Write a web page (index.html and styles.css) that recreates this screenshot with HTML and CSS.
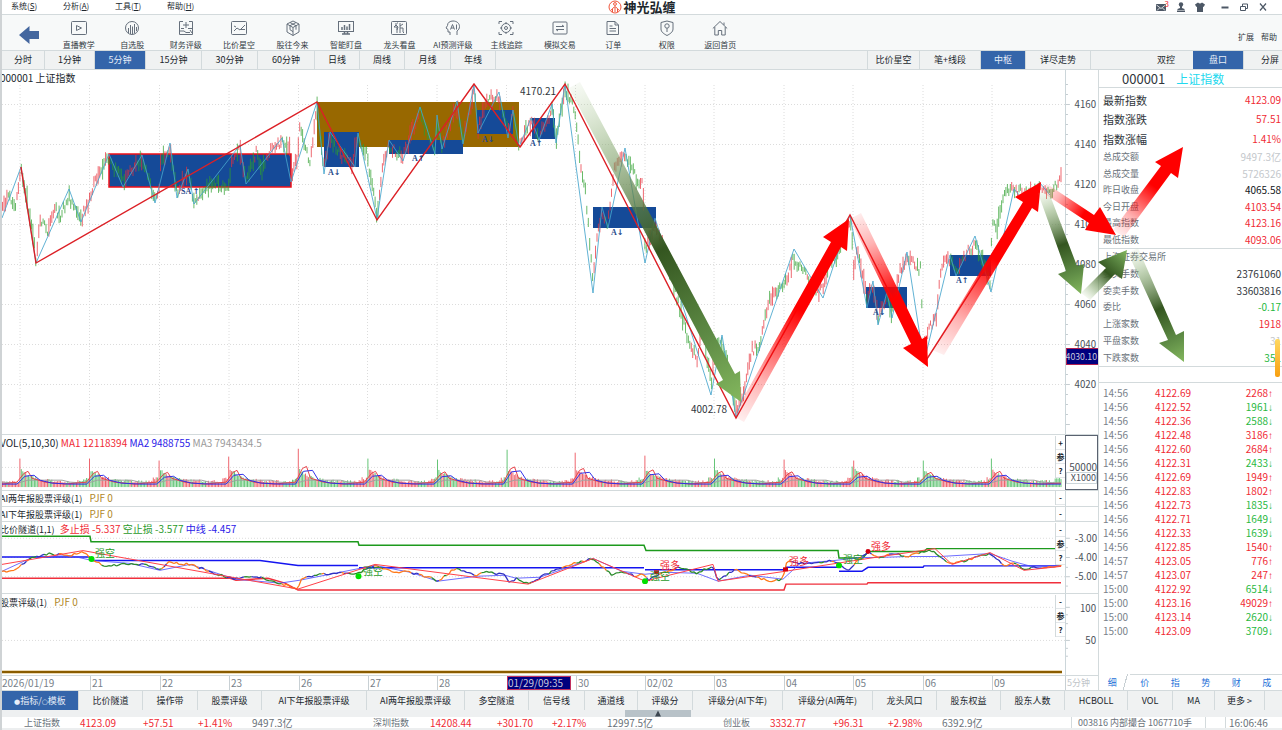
FILE: index.html
```html
<!DOCTYPE html>
<html lang="zh-CN">
<head>
<meta charset="utf-8">
<title>神光弘缠</title>
<link rel="stylesheet" href="styles.css">
</head>
<body>
<div class="app">
  <header class="menubar">
    <nav class="menus">
      <button>系统(<u>S</u>)</button><button>分析(<u>A</u>)</button><button>工具(<u>T</u>)</button><button>帮助(<u>H</u>)</button>
    </nav>
    <div class="brand">
      <svg width="14" height="14" viewBox="0 0 14 14" fill="none" stroke="#f0563c"><circle cx="7" cy="7" r="6"/><circle cx="7" cy="4" r="1.4"/><path d="M4.5 12V8.5L7 6.5l2.5 2V12M7 7v5M3 10l1.5-1M11 10L9.5 9"/></svg>
      <span>神光弘缠</span>
    </div>
    <div class="window-tools">
      <button aria-label="消息" class="mail"><svg width="12" height="9" viewBox="0 0 12 9"><rect x="1" y="1" width="10" height="7" fill="#4d5866"/><path d="M1.5 2L6 5.5 10.5 2M2 7.5l2.5-2.5M10 7.5L7.5 5" stroke="#fff" fill="none" stroke-width=".8"/></svg><span class="count">3</span></button>
      <button aria-label="用户"><svg width="10" height="10" viewBox="0 0 10 10" fill="#4d5866"><circle cx="5" cy="2.5" r="2.2"/><path d="M4 4h2v2l2.5 1v1h-7V7L4 6zM1 8.5h8V10H1z"/></svg></button>
      <button aria-label="皮肤"><svg width="10" height="10" viewBox="0 0 10 10" fill="#4d5866"><path d="M3 .5Q5 2.5 7 .5L10 2.5 8.7 5 8 4.5V10H2V4.5L1.3 5 0 2.5z"/></svg></button>
      <button aria-label="最小化" class="wide"><svg width="10" height="10" viewBox="0 0 10 10"><path d="M1.5 5.5h7" stroke="#4d5866" stroke-width="2"/></svg></button>
      <button aria-label="还原"><svg width="10" height="10" viewBox="0 0 10 10" fill="none" stroke="#4d5866"><path d="M1.5 4.5h5v4h-5zM3.5 4V2h5v4.5H7"/></svg></button>
      <button aria-label="关闭"><svg width="10" height="10" viewBox="0 0 10 10" stroke="#4d5866" stroke-width="1.2"><path d="M2 1.5l6 7M8 1.5l-6 7"/></svg></button>
    </div>
  </header>

  <div class="toolbar">
    <button class="back" aria-label="返回"><svg width="22" height="20" viewBox="0 0 22 20"><path d="M1 10L11.5 1v5H21v8h-9.5v5z" fill="#44679f"/></svg></button>
    <nav class="tools">
      <button><svg viewBox="0 0 16 16"><rect x=".5" y="1.5" width="15" height="13" rx="1"/><path d="M5.5 5.5v5l5-2.5z"/></svg>直播教学</button>
      <button><svg viewBox="0 0 16 16"><circle cx="8" cy="8" r="6.5"/><path d="M4.5 8v5M6.5 5v9M8.5 6.5V14M10.5 4v9.5M12.5 7v4"/></svg>自选股</button>
      <button><svg viewBox="0 0 16 16"><path d="M5 1.5H1.5v13h13v-13H11M8 2v6M5 5h6M3 8.5h3M10 8.5h4M2 11h4l2 1.5h4M12 10l2 3"/></svg>财务评级</button>
      <button><svg viewBox="0 0 16 16"><rect x=".5" y="1.5" width="15" height="13" rx="1"/><path d="M3 11l3-3 3 2 5-5M3 6l2 1M10 9.500h4"/></svg>比价星空</button>
      <button><svg viewBox="0 0 16 16"><path d="M8 1l6 3v8l-6 3.5L2 12V4zM2 4l6 3.5L14 4M8 7.5v8M5 2.500l6 3.200v4M11 2.500L5 5.700v4l3 2"/></svg>股往今来</button>
      <button><svg viewBox="0 0 16 16"><rect x=".5" y="1.5" width="15" height="10"/><path d="M4 10V7M6.5 10V5M9 10V6.5M11.5 10V4" stroke-width="1.5"/><path d="M4 14h8M6.5 12v2M9.5 12v2" stroke-width="1.6"/></svg>智能盯盘</button>
      <button><svg viewBox="0 0 16 16"><rect x=".5" y="1.5" width="15" height="13" rx="1"/><path d="M5 3v2l-2 2h3v6M5 5l2 2-1 3M9 3v10M9 6l3-2M9 8h3v4l1 1M6 3h1"/></svg>龙头看盘</button>
      <button><svg viewBox="0 0 16 16"><path d="M5 15v-3H3V9.5L1 8l1.5-2.5C2.5 2.5 5 1 8 1c4 0 6.5 2.5 6.5 5.5 0 2-1 3.5-2.5 4.5v4M5.5 9.5l2-5 2 5M6 8h3M11.5 4.5v5"/></svg>AI预测评级</button>
      <button><svg viewBox="0 0 16 16"><path d="M1 4V1.5h3M12 1.5h3V4M15 12v2.5h-3M4 14.5H1V12"/><circle cx="8" cy="8" r="4.5"/><circle cx="8" cy="8" r="1.5"/><path d="M8 2v1.5M8 12.5V14M2 8h1.5M12.5 8H14"/></svg>主线追踪</button>
      <button><svg viewBox="0 0 16 16"><rect x="1" y="2" width="14" height="12" rx="1"/><path d="M4 6.5h8L10 5M12 9.5H4l2 1.5"/></svg>模拟交易</button>
      <button><svg viewBox="0 0 16 16"><path d="M2 1.5h8l3.5 3.5v9.5H2zM10 1.5V5h3.5M4.5 6h3M4.5 8.5h6.5M4.5 11h6.5"/></svg>订单</button>
      <button><svg viewBox="0 0 16 16"><path d="M8 1l6 1.5V9c0 3-3 5-6 6.5C5 14 2 12 2 9V2.5z"/><circle cx="8" cy="6" r="2.2"/><path d="M8 8.2V12"/></svg>权限</button>
      <button><svg viewBox="0 0 16 16"><path d="M.8 8.5L8 1.5l7.2 7M2.8 7v8h3.5v-4.5h3.4V15h3.5V7M12 5V2.5"/></svg>返回首页</button>
    </nav>
    <div class="tool-links"><a href="#">扩展</a><a href="#">帮助</a></div>
  </div>

  <nav class="periods">
    <button>分时</button><button>1分钟</button><button class="on">5分钟</button><button>15分钟</button><button>30分钟</button><button>60分钟</button><button>日线</button><button>周线</button><button>月线</button><button>年线</button><span></span><button>比价星空</button><button>笔+线段</button><button class="on">中枢</button><button>详尽走势</button><span class="bare"></span><button class="bare">双控</button><button class="on">盘口</button><button class="bare">分屏</button>
  </nav>

  <main class="main">
    <section class="charts">
      <div class="panel price">
        <h1>000001 上证指数</h1>
        <svg class="plot" viewBox="2 70 1063 364" preserveAspectRatio="none">
          <g id="grid-price" class="grid"></g>
          <rect x="317" y="102" width="202" height="45" fill="#986800"/>
          <g fill="#154a98">
            <rect x="109" y="154" width="182" height="33" stroke="#f01018" stroke-width="1.5"/>
            <rect x="324" y="132" width="35" height="35"/><rect x="389" y="140" width="74" height="14"/>
            <rect x="477" y="110" width="36" height="24"/><rect x="532" y="118" width="23" height="21"/>
            <rect x="593" y="207" width="63" height="21"/><rect x="866" y="287" width="41" height="21"/>
            <rect x="950" y="255" width="41" height="21"/>
          </g>
          <g id="candles" class="candles"></g>
          <polyline class="stroke-line" points="2,218 21,167 36,263 69,189 81,222 109,154 123,187 142,155 155,203 170,143 177,198 188,169 194,204 240,145 246,184 282,138 291,182 317,102 324,174 330,132 355,167 358,133 377,219 389,140 403,161 420,107 435,154 437,115 442,149 457,101 463,144 474,84 478,133 499,92 508,138 513,110 519,147 531,118 539,140 552,104 556,143 565,84 593,293 602,207 608,228 625,148 645,263 655,218 711,395 722,335 736,417 794,249 823,298 850,215 867,308 873,281 878,325 887,292 892,318 907,252 924,362 950,255 956,276 975,236 991,292 1014,189 1020,196 1040,183 1050,195"/>
          <polyline class="trend-line" points="21,167 36,263 317,102 377,220 474,84 520,147 565,84 736,418 850,215 925,362 1040,183"/>
          <g class="marks">
            <text x="181" y="194">SA <tspan>↑</tspan></text><text x="328" y="175">A<tspan>↓</tspan></text><text x="412" y="161">A<tspan>↑</tspan></text><text x="482" y="142">A<tspan>↓</tspan></text><text x="530" y="146">A<tspan>↑</tspan></text><text x="611" y="235">A<tspan>↓</tspan></text><text x="873" y="315">A<tspan>↓</tspan></text><text x="956" y="283">A<tspan>↑</tspan></text>
          </g>
          <text class="peak" x="520" y="95">4170.21</text>
          <text class="peak" x="691" y="413">4002.78</text>
        </svg>
        <svg class="axis" viewBox="1065 70 33 364" preserveAspectRatio="none">
          <g id="axis-price"></g>
          <rect x="1065.5" y="348.5" width="34" height="16" fill="#00007e" stroke="#b02050"/>
          <text x="1097" y="360" class="cursor-value">4030.10</text>
        </svg>
      </div>

      <div class="panel volume">
        <h2>VOL(5,10,30) <b class="red">MA1 12118394</b> <b class="blue">MA2 9488755</b> <b class="grey">MA3 7943434.5</b></h2>
        <svg class="plot" viewBox="2 434 1063 56" preserveAspectRatio="none"><g id="grid-vol" class="grid"></g><g id="vols" class="candles"></g><g id="vol-ma" fill="none" stroke-width="1"></g></svg>
        <div class="knobs"><button>+</button><button>参</button><button>?</button></div>
        <div class="axis vol-axis"><span>50000</span><span class="unit">X1000</span></div>
      </div>

      <div class="panel slim"><h2><i>AI两年报股票评级(1)</i> <b class="gold">PJF 0</b></h2><div class="knobs"><button>-</button></div><div class="axis"></div></div>
      <div class="panel slim"><h2><i>AI下年报股票评级(1)</i> <b class="gold">PJF 0</b></h2><div class="knobs"><button>-</button></div><div class="axis"></div></div>

      <div class="panel tunnel">
        <h2><i>比价隧道(1,1)</i> <b class="red">多止损 -5.337</b> <b class="green">空止损 -3.577</b> <b class="blue">中线 -4.457</b></h2>
        <svg class="plot" viewBox="2 521 1063 72" preserveAspectRatio="none">
          <path class="grid" d="M2 537.5H1065M2 557H1065M2 576.5H1065"/>
          <g fill="none" stroke-width="1.5">
            <polyline stroke="#1d9a1d" points="2,535.5 90,535.5 91,541 358,541 359,544.5 644,544.5 646,550 838,550 839,557.5 863,557.5 868,551 924,551 927,548 1061,548"/>
            <path stroke="#1414f0" d="M2 556.5H90M92 560H260L298 565H358M359 567.5H644M645 569.5H784M785 567H838M839 571H862L868 567H923L924 565.5H1061"/>
            <polyline stroke="#f0303c" points="2,578 230,578 236,580 268,578 285,583 298,590 784,590 786,584 867,584 868,582.5 1061,582.5"/>
          </g>
          <g id="tunnel-price" fill="none"></g>
          <polyline fill="none" stroke="#ff4048" points="2,564 83,550 298,589 375,564 528,584 593,558 645,581 713,564 718,581 785,571 868,558 935,548 952,564 990,552 1024,570 1061,566"/>
          <g fill="#00e000"><circle cx="91.5" cy="558.5" r="3"/><circle cx="358.5" cy="576" r="3"/><circle cx="645" cy="581" r="3"/><circle cx="839" cy="565" r="3"/></g>
          <g fill="#d00010"><circle cx="868" cy="551" r="2.5"/><rect x="654" y="570" width="5" height="4"/><rect x="783" y="567" width="5" height="4"/></g>
          <g class="signals"><text x="95" y="556" class="green">强空</text><text x="363" y="575" class="green">强空</text><text x="650" y="580" class="green">强空</text><text x="843" y="563" class="green">强空</text><text x="660" y="569" class="red">强多</text><text x="789" y="565" class="red">强多</text><text x="871" y="549" class="red">强多</text></g>
        </svg>
        <div class="knobs"><button>-</button><button>参</button><button>?</button></div>
        <svg class="axis" viewBox="1065 521 33 72" preserveAspectRatio="none"><path class="tick" d="M1065 537.5h4M1065 557h4M1065 576.5h4M1065 547h2M1065 567h2M1065 586h2"/><text x="1097" y="541">-3.00</text><text x="1097" y="561">-4.00</text><text x="1097" y="580">-5.00</text></svg>
      </div>

      <div class="panel rating">
        <h2><i>股票评级(1)</i> <b class="gold">PJF 0</b></h2>
        <svg class="plot" viewBox="2 593 1063 82" preserveAspectRatio="none"><path class="grid" d="M2 606.5H1065M2 640H1065"/><path d="M2 672H1062" stroke="#d8b468" stroke-width="3"/><path d="M2 672H1062" stroke="#8a5c00" stroke-width="2"/></svg>
        <div class="knobs"><button>-</button><button>参</button><button>?</button></div>
        <svg class="axis" viewBox="1065 593 33 82" preserveAspectRatio="none"><path class="tick" d="M1065 606.5h4M1065 640h4M1065 623h2M1065 656h2M1065 614h2M1065 648h2"/><text x="1096" y="611">100</text><text x="1096" y="644">50</text></svg>
      </div>

      <div class="dates">
        <span>2026/01/19</span><span>21</span><span>22</span><span>23</span><span>26</span><span>27</span><span>28</span><span><mark>01/29/09:35</mark></span><span>30</span><span>02/02</span><span>03</span><span>04</span><span>05</span><span>06</span><span>09</span><span class="unit">5分钟</span>
      </div>
    </section>

    <aside class="side">
      <h2 class="stock">000001 <span>上证指数</span></h2>
      <dl class="big">
        <div><dt>最新指数</dt><dd class="red">4123.09</dd></div>
        <div><dt>指数涨跌</dt><dd class="red">57.51</dd></div>
        <div><dt>指数涨幅</dt><dd class="red">1.41%</dd></div>
      </dl>
      <dl class="quote">
        <div><dt>总成交额</dt><dd class="pale">9497.3亿</dd></div>
        <div><dt>总成交量</dt><dd class="pale">5726326</dd></div>
        <div><dt>昨日收盘</dt><dd class="ink">4065.58</dd></div>
        <div><dt>今日开盘</dt><dd class="red">4103.54</dd></div>
        <div><dt>最高指数</dt><dd class="red">4123.16</dd></div>
        <div><dt>最低指数</dt><dd class="red">4093.06</dd></div>
      </dl>
      <dl class="quote market">
        <div><dt>上海证券交易所</dt><dd></dd></div>
        <div><dt>委买手数</dt><dd>23761060</dd></div>
        <div><dt>委卖手数</dt><dd>33603816</dd></div>
        <div><dt>委比</dt><dd class="up">-0.17</dd></div>
        <div><dt>上涨家数</dt><dd class="red">1918</dd></div>
        <div><dt>平盘家数</dt><dd class="pale">31</dd></div>
        <div><dt>下跌家数</dt><dd class="up">351</dd></div>
      </dl>
      <span class="thumb"></span>
      <table class="ticks"><tbody id="ticks"></tbody></table>
      <nav class="side-tabs"><button class="on">细</button><button>价</button><button>指</button><button>势</button><button>财</button><button>成</button></nav>
    </aside>

    <svg class="arrows" viewBox="2 70 1280 620" preserveAspectRatio="none"><defs id="fades"></defs><g id="arrow-shapes"></g></svg>
  </main>

  <nav class="indicators">
    <button class="on"><small>●</small>指标/<small>○</small>模板</button><button>比价隧道</button><button>操作带</button><button>股票评级</button><button>AI下年报股票评级</button><button>AI两年报股票评级</button><button>多空隧道</button><button>信号线</button><button>通道线</button><button>评级分</button><button>评级分(AI下年)</button><button>评级分(AI两年)</button><button>龙头风口</button><button>股东权益</button><button>股东人数</button><button>HCBOLL</button><button>VOL</button><button>MA</button><button>更多 &gt;</button><span></span>
  </nav>
  <div class="drawer"><button aria-label="展开"><svg width="8" height="7" viewBox="0 0 8 7"><path d="M4 .5L7 6.5H1z" fill="#3c4650"/></svg></button></div>
  <footer class="status">
    <span>上证指数</span><b>4123.09</b><b>+57.51</b><b>+1.41%</b><em>9497.3亿</em>
    <span>深圳指数</span><b>14208.44</b><b>+301.70</b><b>+2.17%</b><em>12997.5亿</em>
    <span>创业板</span><b>3332.77</b><b>+96.31</b><b>+2.98%</b><em>6392.9亿</em>
    <em class="cell">003816 内部撮合 1067710手</em><em class="cell"></em><em class="cell clock">16:06:46</em>
  </footer>
</div>
<script src="chart.js"></script>
</body>
</html>
```
FILE: styles.css
```css
* { box-sizing: border-box; }
body {
  margin: 0;
  background: #fff;
  color: #20262c;
  font: 10px/14px "Noto Sans CJK SC", "Noto Sans", sans-serif;
}
button { margin: 0; padding: 0; border: 0; background: none; color: inherit; font: inherit; white-space: nowrap; }
h1, h2, dl, dd { margin: 0; font-weight: 400; font-size: 10px; }
b, i, em { font-weight: 400; font-style: normal; }
svg { display: block; }
.red { color: #f02a34; fill: #f02a34; }
.green { color: #2a9a2a; fill: #2a9a2a; }
.blue { color: #2a20e8; }
.grey { color: #9a9a9a; }
.gold { color: #b08828; }

.app {
  display: grid;
  grid-template-columns: minmax(0, 1fr);
  grid-template-rows: 15px 36px 19px minmax(0, 1fr) 20px 7px 13px;
  height: 100vh;
  overflow: hidden;
  border-left: 2px solid #cfd3d5;
}

.menubar { display: grid; grid-template-columns: 1fr auto 1fr; align-items: center; border-bottom: 1px solid #d3dadc; font-size: 8px; line-height: 12px; }
.menus { display: flex; padding-left: 9px; }
.menus button { width: 52px; padding-bottom: 2px; text-align: left; }
.brand { display: flex; align-items: center; gap: 1px; font-size: 13px; font-weight: 700; line-height: 14px; }
.window-tools { display: flex; justify-content: flex-end; align-items: center; gap: 9px; padding-right: 14px; }
.window-tools .wide { margin-left: 6px; }
.mail { position: relative; }
.count { position: absolute; top: -4px; right: -2px; color: #f02a34; font-size: 8px; line-height: 10px; }

.toolbar { display: grid; grid-template-columns: 50px 695fr 535fr; background: #f7f9f9; border-bottom: 1px solid #d3dadc; font-size: 8px; line-height: 10px; }
.back { display: flex; align-items: center; justify-content: center; padding: 4px 0 0 4px; }
.tools { display: grid; grid-template-columns: repeat(13, minmax(0, 1fr)); }
.tools button { display: flex; flex-direction: column; align-items: center; gap: 4px; padding-top: 5px; color: #333b44; }
.tools svg { width: 16px; height: 16px; fill: none; stroke: #66707c; stroke-width: 1; }
.tool-links { display: flex; justify-content: flex-end; align-items: center; gap: 7px; padding: 9px 5px 0 0; }
.tool-links a { color: #333b44; text-decoration: none; }

.periods {
  display: grid;
  grid-template-columns: 43fr 50fr 51fr 56fr 56fr 57fr 45fr 45fr 46fr 45fr 372fr 52fr 61fr 45fr 65fr 48fr 54fr 51fr 52fr;
  margin-right: -14px;
  background: #f0f2f2;
  border-bottom: 1px solid #d3dadc;
  font-size: 9px;
}
.periods button, .periods span { border-right: 1px solid #d3dadc; min-width: 0; }
.periods .bare { border-right: 0; }
.periods .on, .indicators .on { background: #3465aa; color: #e8eef8; }

.main { position: relative; display: grid; grid-template-columns: minmax(0, 1fr) 184px; grid-template-rows: minmax(0, 1fr); min-height: 0; }
.charts {
  display: grid;
  grid-template-rows: minmax(0, 364fr) minmax(0, 56fr) minmax(0, 16fr) minmax(0, 15fr) minmax(0, 72fr) minmax(0, 82fr) minmax(0, 15fr);
  min-width: 0;
  min-height: 0;
}
.panel { position: relative; display: grid; grid-template-columns: minmax(0, 1fr) 33px; grid-template-rows: minmax(0, 1fr); min-height: 0; }
.panel + .panel { border-top: 1px solid #d3dadc; }
.panel > h1, .panel > h2 { position: absolute; left: -2px; top: 1px; white-space: nowrap; }
.panel > h2 i { font-size: 9px; margin-right: 5px; }
.slim > h2, .tunnel > h2 { top: 0; }
.tunnel > h2 i { margin-right: 3px; }
.plot { grid-column: 1; width: 100%; height: 100%; min-height: 0; }
.axis { grid-column: 2; width: 100%; height: 100%; min-height: 0; border-left: 1px solid #ccd6da; overflow: hidden; }
.axis text { font-size: 10px; text-anchor: end; fill: #4a5058; }
.axis .cursor-value { font-size: 9px; text-anchor: end; fill: #c8c8dc; }
.tick { stroke: #c4ccd0; }
.vol-axis { display: flex; flex-direction: column; justify-content: flex-end; border: 1px solid #5a6270; color: #4a5058; font-size: 10px; line-height: 11px; padding-bottom: 5px; text-align: right; }
.vol-axis .unit { border: 1px solid #ccd6da; font-size: 9px; line-height: 10px; }
.knobs { position: absolute; right: 33px; top: 1px; width: 10px; display: grid; grid-auto-rows: 14px; border-left: 1px solid #d3dadc; background: #fff; font-size: 8px; }
.knobs button { border-bottom: 1px solid #e3e7e9; line-height: 13px; font-weight: 700; }
.slim .knobs { top: 0; }

.grid { stroke: #dcdcdc; stroke-dasharray: 1 2; fill: none; }
.candles path { fill: none; }
.stroke-line { fill: none; stroke: #45a5cc; stroke-width: 1; stroke-opacity: .85; }
.trend-line { fill: none; stroke: #dc2026; stroke-width: 1.4; }
.marks text { font: 700 8px "Liberation Serif", serif; fill: #284a8c; }
.marks tspan { font: 700 8px "DejaVu Sans", sans-serif; }
.peak { font-size: 10px; fill: #30363c; }
.signals text { font-size: 10px; }

.dates {
  display: grid;
  grid-template-columns: 88fr 70fr 69fr 70fr 69fr 69fr 70fr 69fr 69fr 69fr 70fr 69fr 70fr 69fr 73fr 33px;
  border-top: 1px solid #d3dadc;
  color: #78818a;
  line-height: 13px;
}
.dates span { min-width: 0; padding-left: 1px; border-left: 1px solid #c8d0d4; white-space: nowrap; }
.dates span:first-child { border-left: 0; padding-left: 0; }
.dates span:has(mark) { padding: 0; border: 0; }
.dates mark { display: block; width: 64px; background: #00007e; border: 1px solid #c03060; color: #c8c8dc; line-height: 12px; }
.dates .unit { color: #c0c4c8; font-size: 9px; }

.side { position: relative; display: flex; flex-direction: column; min-height: 0; border-left: 1px solid #d3dadc; color: #30363c; }
.stock { flex: 0 0 18px; padding-left: 23px; border-bottom: 1px solid #d3dadc; font-size: 13px; line-height: 17px; }
.stock span { padding-left: 8px; color: #22d8ee; font-size: 12px; }
.side dl > div { display: flex; justify-content: space-between; align-items: center; padding: 0 1px 0 4px; }
.big { flex: 0 0 61px; display: grid; grid-auto-rows: 1fr; padding-top: 2px; }
.big dt { font-size: 11px; }
.quote { flex: 0 0 100px; display: grid; grid-auto-rows: 1fr; border-bottom: 1px solid #d3dadc; }
.quote dt { color: #6a727a; font-size: 9px; }
.market { flex-basis: 118px; }
.up { color: #28b840; }
.pale { color: #c4c8cc; }
.ink { color: #101418; }
.thumb { position: absolute; right: 2px; top: 269px; width: 5px; height: 38px; border-radius: 2px; background: linear-gradient(#ffd860, #f8a010); }
.ticks { margin-top: 15px; border-top: 1px solid #d3dadc; border-collapse: separate; border-spacing: 0; padding-top: 3px; table-layout: fixed; }
.ticks td { height: 14px; padding: 0; line-height: 14px; }
.ticks td:nth-child(1) { width: 34px; padding-left: 4px; color: #78818a; }
.ticks td:nth-child(2) { width: 60px; text-align: right; padding-right: 2px; }
.ticks td:nth-child(3) { text-align: right; padding-right: 9px; }
.ticks .dir { font: 10px/8px "Liberation Sans", sans-serif; }
.side-tabs { margin-top: auto; display: grid; grid-template-columns: repeat(6, 1fr); border-top: 1px solid #d3dadc; color: #1c70d8; font-size: 9px; line-height: 15px; }
.side-tabs .on { margin-top: -1px; padding-right: 4px; background: #fff linear-gradient(105deg, transparent 27px, #c8d0d4 27px, #c8d0d4 28px, transparent 28px); }

.arrows { position: absolute; inset: 0; width: 100%; height: 100%; pointer-events: none; }

.indicators {
  display: grid;
  grid-template-columns: 77fr 64fr 55fr 64fr 105fr 98fr 64fr 56fr 53fr 55fr 90fr 90fr 64fr 64fr 64fr 63fr 45fr 42fr 50fr 17fr;
  background: #f0f2f2;
  border-top: 1px solid #d3dadc;
  font-size: 9px;
}
.indicators button { min-width: 0; border-right: 1px solid #d3dadc; }
.indicators small { font: 7px "DejaVu Sans", sans-serif; }
.drawer { display: flex; background: #eef0f1; }
.drawer button { width: 66px; margin-left: 48.7%; background: #b8c2c8; display: flex; justify-content: center; }
.status {
  display: grid;
  grid-template-columns: 56fr 63fr 55fr 54fr 121fr 57fr 67fr 55fr 55fr 116fr 47fr 63fr 55fr 54fr 129fr 134fr 20fr 57fr;
  padding-left: 22px;
  border-bottom: 2px solid #eceeef;
  color: #6a727a;
  font-size: 10px;
  line-height: 11px;
  white-space: nowrap;
}
.status > * { min-width: 0; }
.status span { font-size: 9px; }
.status b { color: #f02a34; }
.status .cell { border-left: 1px solid #d3dadc; padding-left: 6px; font-size: 9px; }
.status .clock { padding-left: 3px; font-size: 10px; }
```
FILE: chart.js
```js
const NS = 'http://www.w3.org/2000/svg';
const byId = id => document.getElementById(id);
function add(parent, tag, attrs, text) {
  const el = document.createElementNS(NS, tag);
  for (const k in attrs) el.setAttribute(k, attrs[k]);
  if (text) el.textContent = text;
  parent.appendChild(el);
  return el;
}
let seed = 17;
const rnd = () => (seed = (seed * 16807) % 2147483647) / 2147483647;
const parse = s => s.trim().split(/\s+/).map(p => p.split(',').map(Number));
function at(pts, x) {
  for (let i = 1; i < pts.length; i++) {
    if (x <= pts[i][0]) {
      const [a, b] = pts[i - 1], [c, d] = pts[i];
      return { y: b + (d - b) * (x - a) / (c - a || 1), slope: (d - b) / (c - a || 1) };
    }
  }
  return { y: pts[pts.length - 1][1], slope: 0 };
}

const days = [20, 89.5, 159.5, 229, 298.5, 367.5, 437, 506.5, 575.5, 645, 714, 784, 853, 923, 992];
const STEP = 1.45;

// Grid
let v = '', h = '';
days.forEach(x => { v += `M${x} 85V420`; });
for (let i = 0; i < 8; i++) h += `M2 ${104.5 + i * 40}H1065`;
add(byId('grid-price'), 'path', { d: v + h });
add(byId('grid-vol'), 'path', { d: 'M2 467H1065' });

// Price axis
let ticks = '';
for (let y = 84.5; y < 425; y += 10) ticks += `M1065 ${y}h${(y - 84.5) % 40 === 20 ? 4 : 2}`;
add(byId('axis-price'), 'path', { d: ticks, class: 'tick' });
for (let i = 0; i < 8; i++) add(byId('axis-price'), 'text', { x: 1096, y: 108 + i * 40 }, String(4160 - i * 20));

// Candles
const price = parse(`2,212 8,198 15,206 19,190 21,169 25,192 30,215 36,259 40,222 48,230 55,208 60,218 69,196 74,210 81,218 88,205 92,190 100,168 108,158
123,180 130,172 142,160 155,200 159,192 161,155 167,158 170,148 177,192 188,175 194,200 205,188 215,182 228,190 231,165 240,150 246,180 256,152 262,170 270,150 282,142
290,150 291,178 298,155 299,120 305,150 310,160 317,108 324,168 330,138 340,155 352,163 358,138 367,155 377,214 383,165 389,146 403,158 412,130 420,113 435,148 437,122 442,146 457,107 463,140
474,90 478,128 487,100 499,96 508,130 513,115 519,143 531,122 539,136 552,110 556,138 565,90 575,108 576,125 580,160 586,195 593,285 597,235 602,212 608,224 614,170 625,153 634,175 643,186
645,252 655,222 668,262 680,310 690,345 697,358 703,330 711,385 716,345 722,345 729,370 736,412 745,385 752,350 760,345 768,305 775,290 784,285 794,258 804,272 815,290 823,290 828,265 838,255 850,222
852,230 853,268 858,250 867,298 873,285 878,318 887,298 892,312 900,270 907,257 921,270 923,345 930,325 936,320 941,265 950,260 956,272 966,253 975,245 983,264 990,283 992,222 997,228 1003,195 1010,188 1025,193 1040,188 1050,192 1061,178`);
let up = '', down = '';
let rising = true;
for (let x = 2.5; x < 1062; x += STEP) {
  const p = at(price, x);
  const c = p.y + (rnd() - 0.5) * 9;
  const len = 3 + rnd() * rnd() * 18 + Math.min(Math.abs(p.slope), 5);
  const seg = `M${x.toFixed(1)} ${(c - len / 2).toFixed(1)}v${len.toFixed(1)}`;
  if (rnd() < 0.5) rising = rnd() < 0.5 - Math.max(-0.4, Math.min(0.4, p.slope / 4));
  if (rising) up += seg; else down += seg;
}
add(byId('candles'), 'path', { d: up, stroke: '#e8303c', 'stroke-opacity': 0.72 });
add(byId('candles'), 'path', { d: down, stroke: '#2ea02e', 'stroke-opacity': 0.72 });

// Volume
const tops = [458, 458, 460, 456, 448, 458, 459, 449, 452, 455, 458, 459, 460, 460, 458];
const spikeUp = [1, 1, 1, 1, 1, 0, 0, 0, 1, 1, 0, 1, 1, 0, 0];
let vr = '', vg = '', redRun = true;
for (let x = 2.5; x < 1062; x += STEP) {
  let d = -1;
  days.forEach((q, i) => { if (x >= q - 0.8) d = i; });
  const n = d < 0 ? 36 : Math.round((x - days[d]) / STEP);
  let hgt = 4 + rnd() * 3 + 13 * Math.exp(-n / 9);
  if (n === 0 && d >= 0) hgt = 487 - tops[d];
  if (n > 43) hgt += 3;
  if (rnd() < 0.4) redRun = rnd() < 0.55;
  const red = n === 0 && d >= 0 ? spikeUp[d] : redRun;
  const seg = `M${x.toFixed(1)} 487v${(-hgt).toFixed(1)}`;
  if (red) vr += seg; else vg += seg;
}
add(byId('vols'), 'path', { d: vr, stroke: '#e8303c', 'stroke-opacity': 0.75 });
add(byId('vols'), 'path', { d: vg, stroke: '#30b048', 'stroke-opacity': 0.75 });
let m1 = 'M2 484', m2 = 'M2 484', m3 = 'M2 482';
days.forEach((x, i) => {
  const k = (tops[i] - 458) / 2;
  m1 += `L${x - 3} 482L${x + 4} ${473 + k}L${x + 8} ${471 + k}L${x + 12} 478L${x + 25} 482L${x + 45} 484`;
  m2 += `L${x - 3} 484L${x + 5} ${476 + k}L${x + 14} ${475 + k}L${x + 20} 480L${x + 32} 483L${x + 50} 484`;
  m3 += `L${x - 2} 483L${x + 8} 480L${x + 42} 480L${x + 50} 482`;
});
add(byId('vol-ma'), 'path', { d: m3 + 'L1061 483', stroke: '#a0a0a0' });
add(byId('vol-ma'), 'path', { d: m1 + 'L1061 483', stroke: '#e84048' });
add(byId('vol-ma'), 'path', { d: m2 + 'L1061 484', stroke: '#3030e8' });

// Tunnel
const tun = parse(`2,571 14,571 32,557 50,553 70,555 83,550 92,560 106,566 130,563 150,565 160,570 167,562 190,564 215,573 235,579 255,576 280,583 298,589 300,580 315,575 340,572 355,574 375,565 390,571 410,572 428,577 438,581 455,568 477,576 485,571 505,575 510,583 516,578 528,584 540,577 560,567 593,558 612,575 622,571 635,576 645,574 648,580 665,572 680,567 697,573 713,565 718,581 735,569 750,575 770,581 783,579 787,560 800,563 815,562 835,560 848,570 860,557 868,551 878,557 895,553 908,556 930,549 940,556 952,564 990,553 1005,565 1013,561 1024,570 1035,567 1045,568 1061,565`);
const runs = { '#ff7a1a': '', '#2a8a2a': '', '#3030c0': '' };
const names = Object.keys(runs);
let prev = [2, 571], color = 0;
for (let x = 4; x < 1062; x += 2.5) {
  const y = at(tun, x).y + (rnd() - 0.5) * 2.4;
  if (rnd() < 0.35) color = Math.floor(rnd() * 3);
  runs[names[color]] += `M${prev[0]} ${prev[1]}L${x} ${y.toFixed(1)}`;
  prev = [x, y.toFixed(1)];
}
add(byId('tunnel-price'), 'polyline', { points: tun.filter((p, i) => i % 2 === 0).join(' '), stroke: '#4848ff', 'stroke-width': 0.8 });
names.forEach(n => add(byId('tunnel-price'), 'path', { d: runs[n], stroke: n, 'stroke-width': 1.3 }));

// Forecast arrows: outline, then gradient start and end
const arrows = [
  ['g', '569,88 580,82 735,374 740,371 741,402 716,384 723,380', 575, 85, 741, 402],
  ['r', '733,416 744,422 841,247 847,251 849,219 823,237 831,242', 738, 420, 849, 219],
  ['r', '850,219 861,213 922,339 927,336 928,367 903,348 911,344', 855, 214, 928, 367],
  ['r', '932,350 944,355 1032,208 1038,212 1041,182 1015,197 1023,202', 938, 353, 1041, 182],
  ['r', '1047,184 1042,192 1089,223 1085,230 1116,235 1100,207 1094,215', 1044, 188, 1116, 235],
  ['g', '1038,193 1048,190 1077,266 1084,264 1081,294 1058,274 1066,271', 1043, 191, 1081, 294],
  ['g', '1081,293 1090,300 1115,274 1122,279 1127,250 1098,262 1106,268', 1085, 297, 1127, 250],
  ['r', '1113,230 1124,237 1171,173 1178,178 1183,147 1155,162 1161,166', 1118, 234, 1183, 147],
  ['g', '1128,253 1138,248 1176,335 1184,331 1184,362 1159,343 1168,340', 1133, 251, 1184, 362]
];
const stops = {
  r: [[0, '#ff0000', 0.06], [0.2, '#ff0000', 0.3], [0.55, '#ff0000', 1], [1, '#ff0000', 1]],
  g: [[0, '#a9c890', 0.1], [0.2, '#86a870', 0.55], [0.52, '#345620', 1], [0.8, '#5f8c46', 1], [1, '#84b85e', 1]]
};
arrows.forEach(([kind, pts, x1, y1, x2, y2], i) => {
  const g = add(byId('fades'), 'linearGradient', { id: 'fade' + i, gradientUnits: 'userSpaceOnUse', x1, y1, x2, y2 });
  stops[kind].forEach(([o, c, a]) => add(g, 'stop', { offset: o, 'stop-color': c, 'stop-opacity': a }));
  add(byId('arrow-shapes'), 'polygon', { points: pts, fill: `url(#fade${i})` });
});

// Trades
const trades = `14:56 4122.69 2268↑|14:56 4122.52 1961↓|14:56 4122.36 2588↓|14:56 4122.48 3186↑|14:56 4122.60 2684↑|14:56 4122.31 2433↓|14:56 4122.69 1949↑|14:56 4122.83 1802↑|14:56 4122.73 1835↓|14:56 4122.71 1649↓|14:56 4122.33 1639↓|14:56 4122.85 1540↑|14:57 4123.05 776↑|14:57 4123.07 247↑|15:00 4122.92 6514↓|15:00 4123.16 49029↑|15:00 4123.14 2620↓|15:00 4123.09 3709↓`;
byId('ticks').innerHTML = trades.split('|').map(row => {
  const [t, p, n] = row.split(' ');
  const dir = n.slice(-1);
  return `<tr><td>${t}</td><td class="red">${p}</td><td class="${dir === '↑' ? 'red' : 'up'}">${n.slice(0, -1)}<span class="dir">${dir}</span></td></tr>`;
}).join('');
```
